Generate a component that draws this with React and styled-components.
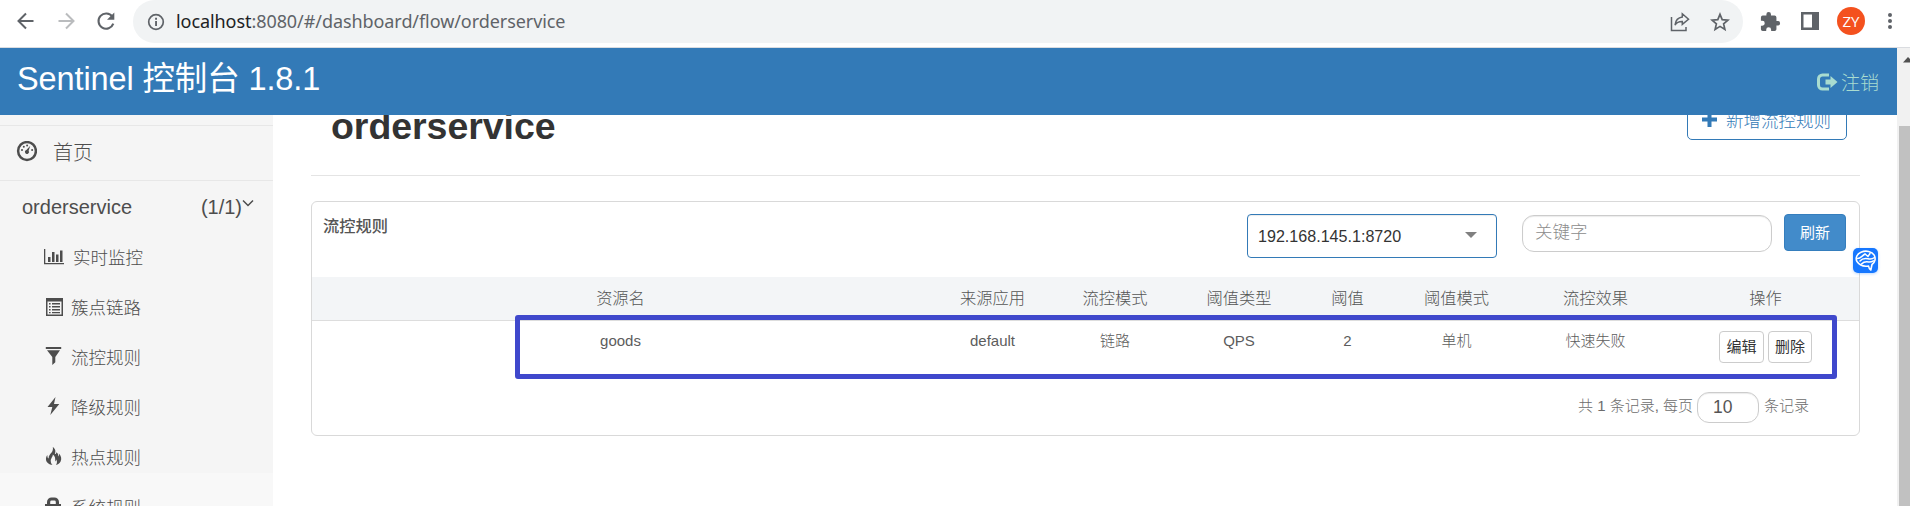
import React from "react";
import styled, { createGlobalStyle } from "styled-components";

const GlobalStyle = createGlobalStyle`
  * { box-sizing: border-box; }
  html, body { margin: 0; padding: 0; background: #fff; overflow: hidden; }
  body { font-family: "Liberation Sans", "Noto Sans CJK SC", sans-serif; font-weight: 300; color: #333; }
  button, input { font-family: inherit; font-weight: inherit; }
`;

const Window = styled.div`
  display: flex;
  flex-direction: column;
  width: 1910px;
  height: 506px;
  overflow: hidden;
`;

/* browser chrome */
const BrowserBar = styled.div`
  flex: none;
  display: flex;
  height: 48px;
  padding: 0 9px 4px 16px;
  border-bottom: 1px solid #dadce0;
`;
const NavButtons = styled.div`
  display: flex;
  align-items: center;
  gap: 20px;
  width: 117px;
  padding-bottom: 2px;
`;
const AddressBar = styled.div`
  display: flex;
  align-items: center;
  width: 1610px;
  height: 43px;
  padding: 0 13px 0 14px;
  border-radius: 22px;
  background: #f1f3f4;
`;
const Url = styled.span`
  flex: 1;
  margin-left: 11px;
  padding-bottom: 2px;
  font: 400 18px/24px "Noto Sans", sans-serif;
  letter-spacing: ${(p) => p.$spacing}px;
  color: #5f6368;
  white-space: nowrap;
  b { font-weight: 400; color: #202124; }
`;
const AddressActions = styled.div`
  display: flex;
  align-items: center;
  gap: 20px;
`;
const Extensions = styled.div`
  display: flex;
  align-items: center;
  gap: 18px;
  padding-left: 17px;
  padding-bottom: 1px;
  svg:nth-of-type(2) { margin-left: 2px; }
  svg:last-child { margin-left: 4px; }
`;
const Avatar = styled.div`
  width: 28px;
  height: 28px;
  border-radius: 50%;
  background: #f4511e;
  color: #fff;
  font: 400 15px/28px "Open Sans", sans-serif;
  text-align: center;
`;

/* page frame */
const Page = styled.div`
  flex: 1;
  display: flex;
  min-height: 0;
`;
const Content = styled.div`
  flex: 1;
  display: flex;
  flex-direction: column;
  min-width: 0;
`;
const Scrollbar = styled.div`
  flex: none;
  display: flex;
  flex-direction: column;
  align-items: flex-end;
  width: 13px;
  background: #f1f1f1;
`;
const ScrollUp = styled.div`
  height: 78px;
  padding-top: 9px;
  line-height: 0;
`;
const ScrollThumb = styled.div`
  flex: 1;
  width: 11px;
  background: #c1c1c1;
`;
const Header = styled.header`
  flex: none;
  display: flex;
  justify-content: space-between;
  height: 67px;
  padding: 0 18px 0 17px;
  background: #337ab7;
`;
const Brand = styled.span`
  padding-top: 10px;
  font-size: 32.5px;
  line-height: 42px;
  font-weight: 400;
  letter-spacing: -0.12px;
  color: #fff;
`;
const Logout = styled.a`
  display: flex;
  align-items: center;
  gap: 3px;
  font-size: 19px;
  color: #a9dcd0;
`;
const Body = styled.div`
  flex: 1;
  display: flex;
  min-height: 0;
  overflow: hidden;
`;

/* sidebar */
const Sidebar = styled.nav`
  flex: none;
  width: 273px;
  background: linear-gradient(#f5f5f5 358px, #f8f8f8 358px);
  color: #4d4d4d;
`;
const HomeItem = styled.div`
  display: flex;
  align-items: center;
  gap: 16px;
  height: 56px;
  margin-top: 10px;
  padding: 0 17px 3px 16px;
  border: solid #e7e7e7;
  border-width: 1px 0;
  font-size: 20px;
`;
const AppItem = styled.div`
  display: flex;
  align-items: center;
  height: 52px;
  padding: 0 19px 0 22px;
  font-size: 20px;
`;
const AppName = styled.span`
  flex: 1;
`;
const SubItem = styled.div`
  display: flex;
  align-items: center;
  height: 50px;
  padding: 0 0 3px 43px;
  font-size: 17.5px;
`;
const SubIcon = styled.span`
  display: flex;
  width: ${(p) => p.$width}px;
`;

/* main */
const Main = styled.main`
  flex: 1;
  margin: -20px 37px 0 38px;
`;
const TitleRow = styled.div`
  display: flex;
  justify-content: space-between;
  height: 81px;
  padding: 5px 13px 0 20px;
  border-bottom: 1px solid #e4e4e4;
`;
const Title = styled.h1`
  margin: 5px 0 0;
  font-size: 37.5px;
  line-height: 42px;
  font-weight: 700;
  letter-spacing: -0.05px;
  color: #333;
`;
const AddButton = styled.button`
  display: flex;
  align-items: center;
  gap: 9px;
  width: 160px;
  height: 40px;
  padding: 0 14px 1px;
  border: 1px solid #337ab7;
  border-radius: 5px;
  background: #fff;
  color: #337ab7;
  font-size: 17.5px;
  white-space: nowrap;
`;
const Card = styled.section`
  height: 235px;
  margin-top: 25px;
  border: 1px solid #d9d9d9;
  border-radius: 6px;
`;
const Toolbar = styled.div`
  display: flex;
  align-items: flex-start;
  height: 75px;
  padding: 12px 13px 0 11px;
`;
const CardTitle = styled.span`
  flex: 1;
  margin-top: -1px;
  font-size: 16.25px;
  line-height: 26px;
  font-weight: 500;
  color: #555;
`;
const Select = styled.div`
  display: flex;
  align-items: center;
  justify-content: space-between;
  width: 250px;
  height: 44px;
  margin-right: 25px;
  padding: 0 19px 0 10px;
  border: 1px solid #337ab7;
  border-radius: 4px;
  box-shadow: inset 0 1px 1px rgba(0, 0, 0, 0.08);
  font-size: 16.1px;
`;
const Caret = styled.i`
  border: solid transparent;
  border-width: 6px 6px 0;
  border-top-color: #808080;
  margin-bottom: 3px;
`;
const SearchInput = styled.input`
  width: 250px;
  height: 37px;
  margin: 1px 12px 0 0;
  padding: 0 12px 2px;
  border: 1px solid #ccc;
  border-radius: 12px;
  box-shadow: inset 0 1px 1px rgba(0, 0, 0, 0.08);
  font-size: 17.5px;
  &::placeholder { color: #8c8c8c; }
`;
const RefreshButton = styled.button`
  width: 62px;
  height: 37px;
  padding: 0 0 2px;
  border: 1px solid #357ebd;
  border-radius: 4px;
  background: #428bca;
  color: #fff;
  font-size: 15px;
  font-weight: 400;
`;
const Row = styled.div`
  display: grid;
  grid-template-columns: 617px 127px 118px 130px 87px 131px 147px 1fr;
  text-align: center;
`;
const HeadRow = styled(Row)`
  align-items: center;
  height: 44px;
  padding-bottom: 3px;
  border-bottom: 1px solid #ddd;
  background: #f3f5f7;
  font-size: 16.25px;
  color: #555;
  span:last-child { padding-left: 3px; }
`;
const DataRow = styled(Row)`
  height: 58px;
  padding-top: 9px;
  font-size: 15px;
  line-height: 22px;
  color: #5c5c5c;
`;
const Actions = styled.div`
  display: flex;
  justify-content: center;
  gap: 4px;
  padding: 1px 0 0 3px;
`;
const SmallButton = styled.button`
  width: ${(p) => p.$width}px;
  height: 32px;
  padding: 0 0 3px;
  border: 1px solid #ccc;
  border-radius: 4px;
  background: #fff;
  color: #333;
  font-size: 15px;
  font-weight: 400;
`;
const Pager = styled.div`
  display: flex;
  align-items: center;
  justify-content: flex-end;
  height: 31px;
  margin: 13px 50px 0 0;
  font-size: 15px;
  line-height: 20px;
  color: #6c6c6c;
`;
const PagerText = styled.span`
  padding-bottom: 3px;
`;
const PageSize = styled.span`
  width: 62px;
  height: 31px;
  margin: 0 5px 0 4px;
  padding-left: 15px;
  border: 1px solid #ccc;
  border-radius: 12px;
  box-shadow: inset 0 1px 1px rgba(0, 0, 0, 0.08);
  font-size: 17.5px;
  line-height: 28px;
  color: #555;
`;

/* overlays */
const Highlight = styled.div`
  position: absolute;
  left: 515px;
  top: 315px;
  width: 1322px;
  height: 64px;
  border: 5px solid #3f48cc;
  border-radius: 3px;
`;
const FloatingBadge = styled.div`
  position: absolute;
  left: 1853px;
  top: 248px;
  width: 25px;
  height: 25px;
  border-radius: 5px;
  background: #1677ff;
  box-shadow: 0 1px 3px rgba(22, 119, 255, 0.3);
`;

const Svg = ({ w = 20, h = w, box = `0 0 ${w} ${h}`, children, ...rest }) => (
  <svg width={w} height={h} viewBox={box} fill="currentColor" {...rest}>{children}</svg>
);
const stroke = { fill: "none", stroke: "currentColor" };

const BackIcon = ({ color, flip }) => (
  <Svg w={20} color={color} transform={flip ? "scale(-1 1)" : undefined}>
    <path d="M17.5 10H3M10 2.5L2.5 10l7.5 7.5" {...stroke} strokeWidth="2" />
  </Svg>
);
const ReloadIcon = () => (
  <Svg w={20} color="#5f6368">
    <path d="M16.3 5.6A7.6 7.6 0 1 0 17.3 12.6" {...stroke} strokeWidth="2.1" />
    <path d="M18.3 1.5v7.3H11z" />
  </Svg>
);
const InfoIcon = () => (
  <Svg w={18} color="#5f6368">
    <circle cx="9" cy="9" r="7.3" {...stroke} strokeWidth="1.7" />
    <path d="M8.1 7.9h1.9v5H8.1zM8.1 4.8h1.9v1.9H8.1z" />
  </Svg>
);
const ShareIcon = () => (
  <Svg w={20} color="#5f6368">
    <path d="M1.500 5v13.500h14.500v-3.500" {...stroke} strokeWidth="1.500" />
    <path d="M12.300 1.800l6.200 5.400-6.200 5.200V9.500c-3.400-.1-5.700 1-7.300 3.500.5-4 2.700-7.300 7.300-7.900z" {...stroke} strokeWidth="1.500" />
  </Svg>
);
const StarIcon = () => (
  <Svg w={20} color="#5f6368">
    <path d="M10 2.300l2.200 5.300 5.700.5-4.300 3.700 1.300 5.600L10 14.400l-4.900 3 1.300-5.600-4.300-3.700 5.700-.5z" {...stroke} strokeWidth="1.700" />
  </Svg>
);
const PuzzleIcon = () => (
  <Svg w={21} box="1 0 23 23" color="#5f6368">
    <path d="M20.500 11H19V7a2 2 0 0 0-2-2h-4V3.500a2.500 2.500 0 0 0-5 0V5H4a2 2 0 0 0-2 2v3.800h1.500a2.700 2.700 0 0 1 0 5.400H2V20a2 2 0 0 0 2 2h3.800v-1.500a2.700 2.700 0 0 1 5.400 0V22H17a2 2 0 0 0 2-2v-4h1.500a2.500 2.500 0 0 0 0-5z" />
  </Svg>
);
const PanelIcon = () => (
  <Svg w={18} color="#5f6368">
    <path fillRule="evenodd" d="M0 0h18v18H0zM2.500 2.500v13h8.500v-13z" />
  </Svg>
);
const MenuIcon = () => (
  <Svg w={6} h={18} color="#5f6368">
    <circle cx="3" cy="3" r="2" /><circle cx="3" cy="9" r="2" /><circle cx="3" cy="15" r="2" />
  </Svg>
);
const LogoutIcon = () => (
  <Svg w={22} h={18}>
    <path d="M13 2H6.500A4 4 0 0 0 2.500 6v6a4 4 0 0 0 4 4H13" {...stroke} strokeWidth="3" />
    <path d="M9.500 6.500h5V3l7 6-7 6v-3.500h-5z" />
  </Svg>
);
const DashboardIcon = () => (
  <Svg w={21}>
    <circle cx="11" cy="10" r="8.900" {...stroke} strokeWidth="2.500" />
    <path d="M14.300 4.700l-1.700 5a2 2 0 1 1-2.200-.7z" />
    <circle cx="6" cy="9" r="1" /><circle cx="7.800" cy="5.800" r="1" /><circle cx="11.100" cy="4.500" r="1" /><circle cx="16.100" cy="9" r="1" />
  </Svg>
);
const ChevronIcon = () => (
  <Svg w={12} h={9} style={{ marginBottom: 7 }}>
    <path d="M1 1.500l5 5 5-5" {...stroke} strokeWidth="1.500" />
  </Svg>
);
const ChartIcon = () => (
  <Svg w={21} h={17}>
    <path d="M1 1h1.300v14H21v1.300H1zM5 9h2.500v5H5zM9 4h2.500v10H9zM13 6.500h2.500V14H13zM17 2.500h2.500V14H17z" />
  </Svg>
);
const ListIcon = () => (
  <Svg w={18} h={18} style={{ marginLeft: 2 }}>
    <path fillRule="evenodd" d="M1 0h17v18H1zM2.500 3.500v13h14v-13z" />
    <path d="M4 5h1.600v1.500H4zM7 5h8v1.500H7zM4 8h1.600v1.500H4zM7 8h8v1.500H7zM4 11h1.600v1.500H4zM7 11h8v1.500H7zM4 14h1.600v1.200H4zM7 14h8v1.200H7z" />
  </Svg>
);
const FilterIcon = () => (
  <Svg w={18} h={20} style={{ marginLeft: 2 }}>
    <path d="M.8 0h15.400v2H.8zM2 3.200h13L10.300 10v5.300L7.300 18v-8z" />
  </Svg>
);
const BoltIcon = () => (
  <Svg w={18} h={20} style={{ marginLeft: 2 }}>
    <path d="M10.500 0L2.500 10h4.800l-2 8 9-11H9z" />
  </Svg>
);
const FireIcon = () => (
  <Svg w={18} h={20} style={{ marginLeft: 2 }}>
    <path d="M7.800 0c3 2.200 3 4.600 2 7.200.9 0 1.500-.7 1.600-2 1.900 1 1.900 3 1.600 4.300.8-.4 1-1.200.9-3C16 8.500 17 11.500 15.600 14.500c-.9 2-2.600 3-4.600 3.500 1.300-2 1.300-3.800.1-5.400-.1 1-.4 1.600-1 1.900.5-3.200-.2-5.500-2.300-7C8 10 5.300 11.500 5.800 14.500c.1 1.300.6 2.300 1.700 3.500-3.200-.5-6.200-2.300-6.500-5.300-.2-1.700.3-3.500 1.400-4.700-.1 2 .3 3.200 1.200 3.500C3.600 8.500 5 7.500 6.600 5.500 7.900 3.800 8.200 1.800 7.800 0z" />
  </Svg>
);
const LockIcon = () => (
  <Svg w={18} h={20} style={{ marginLeft: 1 }}>
    <path d="M4.600 8V5a3 3 0 0 1 3-3h2.800a3 3 0 0 1 3 3V8" {...stroke} strokeWidth="3.200" />
    <path d="M1 7h16v11H1z" />
  </Svg>
);
const PlusIcon = () => (
  <Svg w={15}><path d="M5.500 0h4v5.500H15v4H9.500V15h-4V9.500H0v-4h5.500z" /></Svg>
);
const BrainIcon = () => (
  <Svg w={25} color="#fff">
    <path d="M4 13.500C2 10 4 6 8 4.200c5-2.200 11-.8 13.200 3 1.800 3.300.8 7.500-2.200 9.300l-1.200 5.500c-1.500-1-2-2-2.300-4-4.500.8-9-.8-11.500-4.500z" {...stroke} strokeWidth="1.600" strokeLinejoin="round" />
    <path d="M4 10.500c3.500.5 4.500-2.500 8-4.500l3 2.500 2-3M7 13c3-3.500 6-2.500 9-2 2 .3 4-.3 5.500-1.500M8.500 16c2.500-2.500 5-2.300 7-2 2 .2 3.500-.3 5-1.200" {...stroke} strokeWidth="1.500" strokeLinecap="round" />
  </Svg>
);

const menu = [
  ["实时监控", ChartIcon, 30],
  ["簇点链路", ListIcon, 28],
  ["流控规则", FilterIcon, 28],
  ["降级规则", BoltIcon, 28],
  ["热点规则", FireIcon, 28],
  ["系统规则", LockIcon, 28],
];
const columns = ["资源名", "来源应用", "流控模式", "阈值类型", "阈值", "阈值模式", "流控效果", "操作"];
const rule = ["goods", "default", "链路", "QPS", "2", "单机", "快速失败"];

export default function App() {
  return (
    <Window>
      <GlobalStyle />
      <BrowserBar>
        <NavButtons>
          <BackIcon color="#5f6368" />
          <BackIcon color="#babcbe" flip />
          <ReloadIcon />
        </NavButtons>
        <AddressBar>
          <InfoIcon />
          <Url $spacing={-0.07}><b>localhost</b>:8080/#/dashboard/flow/orderservice</Url>
          <AddressActions><ShareIcon /><StarIcon /></AddressActions>
        </AddressBar>
        <Extensions>
          <PuzzleIcon />
          <PanelIcon />
          <Avatar>ZY</Avatar>
          <MenuIcon />
        </Extensions>
      </BrowserBar>
      <Page>
        <Content>
          <Header>
            <Brand>Sentinel 控制台 1.8.1</Brand>
            <Logout><LogoutIcon />注销</Logout>
          </Header>
          <Body>
            <Sidebar>
              <HomeItem><DashboardIcon />首页</HomeItem>
              <AppItem><AppName>orderservice</AppName>(1/1)<ChevronIcon /></AppItem>
              {menu.map(([label, Icon, width]) => (
                <SubItem key={label}><SubIcon $width={width}><Icon /></SubIcon>{label}</SubItem>
              ))}
            </Sidebar>
            <Main>
              <TitleRow>
                <Title>orderservice</Title>
                <AddButton><PlusIcon />新增流控规则</AddButton>
              </TitleRow>
              <Card>
                <Toolbar>
                  <CardTitle>流控规则</CardTitle>
                  <Select>192.168.145.1:8720<Caret /></Select>
                  <SearchInput placeholder="关键字" />
                  <RefreshButton>刷新</RefreshButton>
                </Toolbar>
                <HeadRow>{columns.map((c) => <span key={c}>{c}</span>)}</HeadRow>
                <DataRow>
                  {rule.map((v) => <span key={v}>{v}</span>)}
                  <Actions>
                    <SmallButton $width={45}>编辑</SmallButton>
                    <SmallButton $width={44}>删除</SmallButton>
                  </Actions>
                </DataRow>
                <Pager>
                  <PagerText>共 1 条记录, 每页</PagerText>
                  <PageSize>10</PageSize>
                  <PagerText>条记录</PagerText>
                </Pager>
              </Card>
            </Main>
          </Body>
        </Content>
        <Scrollbar>
          <ScrollUp><Svg w={7} h={6} color="#505050"><path d="M0 5.500L5 0l2 2v3.500z" /></Svg></ScrollUp>
          <ScrollThumb />
        </Scrollbar>
      </Page>
      <Highlight />
      <FloatingBadge><BrainIcon /></FloatingBadge>
    </Window>
  );
}
